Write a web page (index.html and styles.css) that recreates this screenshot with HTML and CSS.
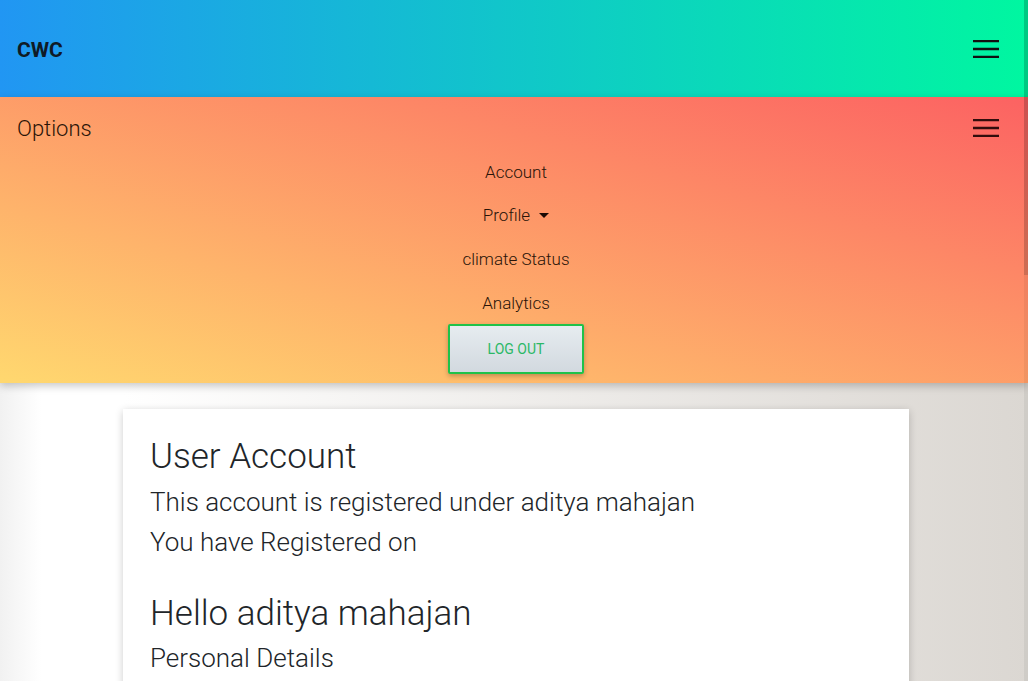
FILE: index.html
```html
<!DOCTYPE html>
<html lang="en">
<head>
<meta charset="utf-8">
<title>CWC</title>
<link rel="stylesheet" href="styles.css">
</head>
<body>
<header class="topbar">
  <span class="brand">CWC</span>
  <button class="toggler" aria-label="menu">
    <svg width="26" height="18" viewBox="0 0 26 18"><path d="M0 1H26M0 9H26M0 17H26" stroke="currentColor" stroke-width="2.4"/></svg>
  </button>
</header>
<nav class="options">
  <div class="options-row">
    <span class="options-title">Options</span>
    <button class="toggler toggler-dark" aria-label="options menu">
      <svg width="26" height="18" viewBox="0 0 26 18"><path d="M0 1H26M0 9H26M0 17H26" stroke="currentColor" stroke-width="2.4"/></svg>
    </button>
  </div>
  <ul class="menu">
    <li class="menu-item">Account</li>
    <li class="menu-item">Profile <span class="caret"></span></li>
    <li class="menu-item">climate Status</li>
    <li class="menu-item">Analytics</li>
  </ul>
  <div class="logout-wrap"><button class="logout">LOG OUT</button></div>
</nav>
<main class="content">
  <section class="card">
    <h1 class="title">User Account</h1>
    <p class="line">This account is registered under aditya mahajan</p>
    <p class="line">You have Registered on</p>
    <h2 class="hello">Hello aditya mahajan</h2>
    <p class="line">Personal Details</p>
  </section>
</main>
<div class="scroll-track"><div class="scroll-thumb"></div></div>
</body>
</html>
```
FILE: styles.css
```css
html { scrollbar-width: none; }
html::-webkit-scrollbar { display: none; }
* { box-sizing: border-box; }
body {
  margin: 0;
  font-family: Roboto, "Noto Sans", sans-serif;
  color: #212529;
  min-height: 100vh;
  background: linear-gradient(to right, #f1f1f1 0%, #ffffff 4%, #ffffff 12%, #dbd7d2 100%);
}
.topbar {
  height: 97px;
  display: flex;
  align-items: center;
  justify-content: space-between;
  padding: 0 29px 0 17px;
  background: linear-gradient(to right, #2196f3 0%, #00f7a0 100%);
}
.brand {
  font-family: Roboto, sans-serif;
  font-weight: 700;
  font-size: 21px;
  color: #0f1a26;
  margin-top: 2px;
}
.toggler {
  border: 0;
  background: none;
  padding: 0;
  width: 26px;
  height: 18px;
  color: #111;
  display: block;
}
.toggler svg { display: block; }
.toggler-dark { color: rgba(20, 0, 0, 0.88); }
.options {
  position: relative;
  z-index: 1;
  background: linear-gradient(to top right, #ffd86f 0%, #fc6262 100%);
  box-shadow: 0 3px 8px rgba(0, 0, 0, 0.22);
  padding: 11px 29px 9px 17px;
}
.options-row {
  height: 42px;
  display: flex;
  align-items: center;
  justify-content: space-between;
}
.options-title {
  font-size: 22px;
  font-weight: 300;
  color: #2a1408;
  line-height: 42px;
}
.options-row .toggler { margin-top: -3px; }
.menu {
  list-style: none;
  margin: 0;
  padding: 0 0 0 16px;
  display: flex;
  flex-direction: column;
  align-items: center;
}
.menu-item {
  font-size: 17px;
  font-weight: 300;
  line-height: 24px;
  padding: 10px 0;
  color: #2a1408;
  display: flex;
  align-items: center;
  gap: 9px;
}
.menu-item:nth-child(2) { padding: 9px 0 10px; }
.caret {
  width: 0;
  height: 0;
  border-left: 5px solid transparent;
  border-right: 5px solid transparent;
  border-top: 5px solid #1a0a04;
}
.logout-wrap {
  display: flex;
  justify-content: center;
  padding-left: 16px;
  margin-top: -1px;
}
.logout {
  width: 136px;
  height: 50px;
  border: 2px solid #1fc24a;
  border-radius: 2px;
  background: linear-gradient(to bottom, #e6ecf0, #d2d9df);
  color: #2bb866;
  font-family: Roboto, sans-serif;
  font-size: 14px;
  font-weight: 400;
  box-shadow: 0 2px 5px rgba(0, 0, 0, 0.25);
}
.content {
  padding: 26px 0 0 123px;
}
.card {
  width: 786px;
  min-height: 300px;
  background: #fff;
  box-shadow: 0 2px 8px rgba(0, 0, 0, 0.2);
  padding: 23px 27px 20px;
}
.title {
  margin: 0;
  font-size: 35px;
  font-weight: 300;
  line-height: 50px;
}
.line {
  margin: 0;
  font-size: 26px;
  font-weight: 300;
  line-height: 40px;
}
.hello {
  margin: 28px 0 0;
  font-size: 35px;
  font-weight: 300;
  line-height: 48px;
}
.scroll-track {
  position: fixed;
  top: 0;
  right: 0;
  width: 4px;
  height: 100%;
  background: rgba(0, 0, 0, 0.05);
  z-index: 5;
}
.scroll-thumb {
  height: 275px;
  background: rgba(0, 0, 0, 0.14);
}
```
